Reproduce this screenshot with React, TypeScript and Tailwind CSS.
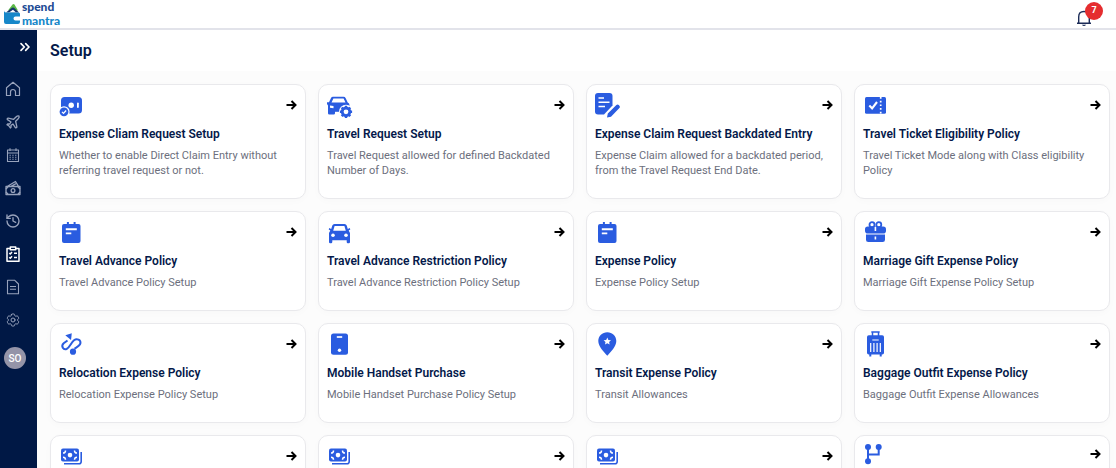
import React from 'react';
import { ChevronsRight, History, Plane } from 'lucide-react';
import { HiOutlineCog6Tooth } from 'react-icons/hi2';

type IconProps = { className?: string };

const BLUE = '#2a5ce0';

/* ---------- Card icons ---------- */

const CardSvg: React.FC<{ children: React.ReactNode; small?: boolean }> = ({ children, small }) => (
  <svg
    viewBox={small ? '0 0 26 20' : '0 0 26 24'}
    className={small ? 'h-5 w-[26px] overflow-visible' : 'h-6 w-[26px] overflow-visible'}
    fill={BLUE}
    aria-hidden="true"
  >
    {children}
  </svg>
);

const ClaimIcon = () => (
  <CardSvg>
    <rect x="2" y="4" width="21" height="16.5" rx="3.5" />
    <circle cx="12.2" cy="12.2" r="2.7" fill="#fff" />
    <rect x="18" y="9.4" width="1.8" height="5.6" rx=".9" fill="#fff" />
    <circle cx="5" cy="18.8" r="5.6" fill="#fff" />
    <circle cx="5" cy="18.8" r="4.4" />
    <path d="M3 18.9l1.5 1.5 2.6-2.9" fill="none" stroke="#fff" strokeWidth="1.3" />
  </CardSvg>
);

const GEAR_ANGLES = [0, 45, 90, 135];

const CarGearIcon = () => (
  <CardSvg>
    <path
      fillRule="evenodd"
      d="M6 3.8h10.5q1.5 0 2.2 1.4l2 4.3q1.8.6 1.8 2.5v6H8v2.2q0 1.3-1.3 1.3H2.3Q1 21.5 1 20.2V12.5L0 11V9.3h2L3.9 5.2Q4.5 3.8 6 3.8zM6.4 5.6L4.5 9.400h14L16.6 5.6z"
    />
    <path d="M3 12.4l3.5.7v2.1L3 14.7z" fill="#fff" />
    <circle cx="19" cy="18.8" r="7" fill="#fff" />
    <path d="M7 18.2h5" stroke={BLUE} strokeWidth="1.2" />
    <circle cx="19" cy="18.8" r="3.8" fill="none" stroke={BLUE} strokeWidth="2.8" />
    {GEAR_ANGLES.map(a => (
      <path key={a} d="M17.8 12.7h2.4v2.2h-2.4zM17.8 22.7h2.4v2.2h-2.4z" transform={`rotate(${a} 19 18.8)`} />
    ))}
  </CardSvg>
);

const DocEditIcon = () => (
  <CardSvg>
    <path d="M3 0h11.5q3 0 3 3v9.5L9 21.5H3q-3 0-3-3V3q0-3 3-3z" />
    <path d="M3.5 5H9M3.5 9.3h11M3.5 13.5H10" stroke="#fff" strokeWidth="1.6" />
    <path d="M12 24.6l.8-4.2 8.6-8.4q1.2-1 2.4.1l.6.6q1.2 1.2 0 2.4L16 23.7z" stroke="#fff" strokeWidth="1" paintOrder="stroke" />
  </CardSvg>
);

const TicketIcon = () => (
  <CardSvg>
    <rect x="2" y="4" width="21" height="16.7" rx="1.5" />
    <path d="M6.3 12.5l2.8 2.8 4.9-6.3" fill="none" stroke="#fff" strokeWidth="2.1" />
    <path d="M17.7 4v17" stroke="#fff" strokeWidth="1.7" strokeDasharray="1.7 2" />
  </CardSvg>
);

const NoteIcon = () => (
  <CardSvg>
    <rect x="3" y="4" width="18.5" height="19" rx="2" />
    <path d="M8.9 2v4M15.6 2v4" stroke={BLUE} strokeWidth="2" />
    <path d="M6.8 9.2h11M6.8 13.4h5.5" stroke="#fff" strokeWidth="1.9" />
  </CardSvg>
);

const CarIcon = () => (
  <CardSvg>
    <path
      fillRule="evenodd"
      d="M7.5 4h10q1.7 0 2.2 1.5L20.8 9l2-.9.5 1.5-1.6.9L23 13v9q0 1.2-1.2 1.2h-.9q-1.2 0-1.2-1.2v-1.8H5.3V22q0 1.2-1.2 1.2h-.9Q2 23.2 2 22v-9l1.3-2.5-1.6-.9.5-1.5 2 .9 1.1-3.5Q5.8 4 7.5 4zM7.6 5.9L6.2 10.7h12.6L17.4 5.9z"
    />
    <circle cx="6" cy="15.3" r="1.8" fill="#fff" />
    <circle cx="19" cy="15.3" r="1.8" fill="#fff" />
  </CardSvg>
);

const GiftIcon = () => (
  <CardSvg>
    <circle cx="9" cy="4.7" r="2.5" fill="none" stroke={BLUE} strokeWidth="1.8" />
    <circle cx="15.8" cy="4.7" r="2.5" fill="none" stroke={BLUE} strokeWidth="1.8" />
    <rect x="2" y="6.5" width="21" height="7" rx="2.8" />
    <path d="M3 14.6h19v5.1q0 2.3-2.3 2.3H5.3Q3 22 3 19.7z" />
    <path d="M12.4 7v4M12.4 16.5v3" stroke="#fff" strokeWidth="1.6" />
  </CardSvg>
);

const RouteIcon = () => (
  <CardSvg>
    <path d="M6.3 3.3L12.8 1.3 12 8z" />
    <path
      d="M8.5 8.5L4.700 11.300C1.600 14.200 4.400 18.300 7.600 17 10.600 15.700 12 10.700 15 8.200 18 6 22 8 21.400 11.300 21 13.600 17.800 15.200 15.500 16.800"
      fill="none"
      stroke={BLUE}
      strokeWidth="2"
    />
    <circle cx="14" cy="19.7" r="3.1" />
  </CardSvg>
);

const PhoneIcon = () => (
  <CardSvg>
    <rect x="4" y="1.5" width="17" height="21.3" rx="2.5" />
    <path d="M9.8 5h5.4" stroke="#fff" strokeWidth="1.7" />
    <circle cx="12.5" cy="18.2" r="1.7" fill="#fff" />
  </CardSvg>
);

const PinIcon = () => (
  <CardSvg>
    <path d="M12.3.3c5 0 9 3.8 9 8.8 0 5.5-5.5 11-9 14.7-3.5-3.7-9-9.2-9-14.7 0-5 4-8.8 9-8.8z" />
    <path d="M12.3 5.5l1.1 2.4 2.6.3-1.9 1.8.5 2.6-2.3-1.3-2.3 1.3.5-2.6-1.9-1.8 2.6-.3z" fill="#fff" />
  </CardSvg>
);

const LuggageIcon = () => (
  <CardSvg>
    <path d="M8.3 0h8.4M9.5 0v4M15.5 0v4" stroke={BLUE} strokeWidth="1.5" />
    <rect x="4" y="3.2" width="17" height="19.3" rx="1.8" />
    <path d="M6.3 22h2v2.4h-2zM16.7 22h2v2.4h-2z" />
    <path d="M9.3 8h6.4M7.7 11v9M10.9 11v9M14.1 11v9M17.3 11v9" stroke="#fff" strokeWidth="1.2" />
  </CardSvg>
);

const CashIcon = () => (
  <CardSvg>
    <rect x="2" y="4.6" width="18" height="13" rx="2" />
    <circle cx="11" cy="11.1" r="2.3" fill="#fff" />
    <path
      d="M4 9q2.5 0 2.5-2.6M18 9q-2.5 0-2.5-2.6M4 13.2q2.5 0 2.5 2.6M18 13.2q-2.5 0-2.5 2.6"
      fill="none"
      stroke="#fff"
      strokeWidth="1.5"
    />
    <path d="M22.2 8v9.5q0 2.3-2.3 2.3H5" fill="none" stroke={BLUE} strokeWidth="1.6" />
  </CardSvg>
);

const BranchIcon = () => (
  <CardSvg small>
    <circle cx="5" cy="3" r="3" />
    <circle cx="15.7" cy="3" r="3" />
    <circle cx="5" cy="17.3" r="3" />
    <path d="M5 3v14M5 10.5h10.7V3" fill="none" stroke={BLUE} strokeWidth="2" />
  </CardSvg>
);

/* ---------- Sidebar icons ---------- */

const HomeIcon = ({ className }: IconProps) => (
  <svg viewBox="0 0 16 16" className={className} fill="none" stroke="currentColor" strokeWidth="1.2" strokeLinejoin="round">
    <path d="M1.5 6.7L8 1.3l6.5 5.4v7.8h-4V11a2.5 2.5 0 0 0-5 0v3.5h-4z" />
  </svg>
);

const CalendarIcon = ({ className }: IconProps) => (
  <svg viewBox="0 0 16 16" className={className} fill="none" stroke="currentColor" strokeWidth="1.1" strokeLinejoin="round">
    <path d="M2.5 3h11v11.5h-11zM2.5 6h11M5 1.3V4M11 1.3V4" />
    <path d="M4.5 8.3h7M4.5 10.3h7M4.5 12.3h7" strokeDasharray="1.3 1.5" />
  </svg>
);

const WalletIcon = ({ className }: IconProps) => (
  <svg viewBox="0 0 16 16" className={className} fill="none" stroke="currentColor" strokeWidth="1.3" strokeLinejoin="round">
    <path d="M1 6.5h14v8H1zM2.5 6.3l8-4.8 3 4.8M6 6.3l5-2.6" />
    <circle cx="8" cy="10.5" r="1.9" />
    <path d="M1 9l2-2.3M15 9l-2-2.3M1 12l2 2.3M15 12l-2 2.3" />
  </svg>
);

const ChecklistIcon = ({ className }: IconProps) => (
  <svg viewBox="0 0 16 16" className={className} fill="none" stroke="currentColor" strokeWidth="1.5" strokeLinejoin="round">
    <path d="M5 2.5H2v12.7h12V2.5h-3" />
    <path d="M5.3 1h5.4v2.8H5.3z" />
    <path d="M4.3 7l1 1 1.7-2M9 7.3h3M4.3 11.3l1 1 1.7-2M9 11.6h3" />
  </svg>
);

const FileIcon = ({ className }: IconProps) => (
  <svg viewBox="0 0 16 16" className={className} fill="none" stroke="currentColor" strokeWidth="1.1" strokeLinejoin="round">
    <path d="M2.5 1.3h7.3l3.7 3.7v9.7h-11zM5 7.5h6M5 10.3h6" />
  </svg>
);

const BellIcon = () => (
  <svg viewBox="0 0 16 18" className="h-[18px] w-4" fill="none" stroke="#1b2b57" strokeWidth="1.4" strokeLinejoin="round">
    <path d="M1 14.3h14M2.7 14V8Q2.7 2.5 8 2.5T13.3 8v6" />
    <path d="M5.8 15.7q2.2 2.5 4.4 0z" fill="#1b2b57" stroke="none" />
  </svg>
);

const ArrowIcon = () => (
  <svg viewBox="0 0 12 12" className="h-3 w-3" fill="none" stroke="#000" strokeWidth="2" aria-hidden="true">
    <path d="M1.5 6h9M6.5 2l4 4-4 4" />
  </svg>
);

/* ---------- Data ---------- */

interface SetupItem {
  icon: React.FC;
  title?: string;
  description?: string;
}

const items: SetupItem[] = [
  { icon: ClaimIcon, title: 'Expense Cliam Request Setup', description: 'Whether to enable Direct Claim Entry without referring travel request or not.' },
  { icon: CarGearIcon, title: 'Travel Request Setup', description: 'Travel Request allowed for defined Backdated Number of Days.' },
  { icon: DocEditIcon, title: 'Expense Claim Request Backdated Entry', description: 'Expense Claim allowed for a backdated period, from the Travel Request End Date.' },
  { icon: TicketIcon, title: 'Travel Ticket Eligibility Policy', description: 'Travel Ticket Mode along with Class eligibility Policy' },
  { icon: NoteIcon, title: 'Travel Advance Policy', description: 'Travel Advance Policy Setup' },
  { icon: CarIcon, title: 'Travel Advance Restriction Policy', description: 'Travel Advance Restriction Policy Setup' },
  { icon: NoteIcon, title: 'Expense Policy', description: 'Expense Policy Setup' },
  { icon: GiftIcon, title: 'Marriage Gift Expense Policy', description: 'Marriage Gift Expense Policy Setup' },
  { icon: RouteIcon, title: 'Relocation Expense Policy', description: 'Relocation Expense Policy Setup' },
  { icon: PhoneIcon, title: 'Mobile Handset Purchase', description: 'Mobile Handset Purchase Policy Setup' },
  { icon: PinIcon, title: 'Transit Expense Policy', description: 'Transit Allowances' },
  { icon: LuggageIcon, title: 'Baggage Outfit Expense Policy', description: 'Baggage Outfit Expense Allowances' },
  { icon: CashIcon },
  { icon: CashIcon },
  { icon: CashIcon },
  { icon: BranchIcon },
];

const navItems: { id: string; icon: React.ElementType; active?: boolean }[] = [
  { id: 'home', icon: HomeIcon },
  { id: 'travel', icon: Plane },
  { id: 'calendar', icon: CalendarIcon },
  { id: 'expenses', icon: WalletIcon },
  { id: 'history', icon: History },
  { id: 'setup', icon: ChecklistIcon, active: true },
  { id: 'reports', icon: FileIcon },
  { id: 'settings', icon: HiOutlineCog6Tooth },
];

/* ---------- Layout ---------- */

const Logo = () => (
  <a href="#" className="flex items-center gap-px">
    <svg viewBox="0 0 17 22" className="h-[22px] w-[17px]" aria-hidden="true">
      <path d="M4 7.5L8.5 1.5q1-1 2 0L14 7.5z" fill="#5cb947" />
      <path d="M2 9.5L8 4.8q1-.6 2 0l5 4.7z" fill="#16356f" />
      <path d="M5 9.5l4-2.8 3 2.8z" fill="#fff" />
      <path d="M0 7.5q0 2 2 2h12.5q1.5 0 1.5 1.5v2.5h-4.5q-2 0-2 2t2 2H16V19q0 2-2 2H2q-2 0-2-2z" fill="#1687c9" />
    </svg>
    <span className="flex flex-col font-['Lato',sans-serif] text-[12px] leading-[14px] font-black">
      <span className="text-[#1c4a94]">spend</span>
      <span className="text-[#1687c9]">mantra</span>
    </span>
  </a>
);

const Header = () => (
  <header className="flex h-[30px] shrink-0 items-center justify-between border-b-2 border-[#e2e3ea] bg-white pr-6 pl-1">
    <Logo />
    <button type="button" className="relative mt-2">
      <BellIcon />
      <span className="absolute -top-[7px] left-[9px] flex h-[18px] w-[18px] items-center justify-center rounded-full bg-[#e52d2f] text-[9px] font-bold text-white">
        7
      </span>
    </button>
  </header>
);

const Sidebar = () => (
  <aside className="flex w-[37px] shrink-0 flex-col bg-[#001845]">
    <button type="button" className="mt-[9px] mr-1 self-end text-white">
      <ChevronsRight className="h-4 w-4" strokeWidth={2.5} />
    </button>
    <nav className="mt-[17px] flex flex-col">
      {navItems.map(({ id, icon: Icon, active }) => (
        <a
          key={id}
          href={`#${id}`}
          className={active ? 'flex h-[33px] items-center pl-[5px] text-white' : 'flex h-[33px] items-center pl-[5px] text-[#98a3bc]'}
        >
          <Icon className="h-4 w-4" />
        </a>
      ))}
    </nav>
    <button
      type="button"
      className="mt-[11px] ml-1 flex h-[22px] w-[22px] items-center justify-center rounded-full bg-[#9494a8] text-[10px] font-medium text-white"
    >
      SO
    </button>
  </aside>
);

const SetupCard: React.FC<{ item: SetupItem }> = ({ item }) => {
  const Icon = item.icon;
  return (
    <a href="#" className="block min-h-[100px] rounded-[10px] border border-[#e9e9ec] bg-white px-2 pt-2 pb-5 shadow-[0_2px_8px_rgba(0,0,0,0.02)]">
      <div className="flex items-center justify-between">
        <Icon />
        <ArrowIcon />
      </div>
      {item.title && <h2 className="mt-2 text-[12px] leading-[18px] font-semibold text-[#04194a]">{item.title}</h2>}
      {item.description && <p className="mt-[5px] text-[11px] leading-[15px] text-[#6c6f7d]">{item.description}</p>}
    </a>
  );
};

const App: React.FC = () => {
  return (
    <div className="flex h-screen flex-col overflow-hidden bg-white font-['Roboto',sans-serif]">
      <Header />
      <div className="flex min-h-0 flex-1">
        <Sidebar />
        <main className="flex min-w-0 flex-1 flex-col">
          <div className="flex h-[41px] shrink-0 items-center bg-white px-[13px]">
            <h1 className="text-base font-semibold text-[#04194a]">Setup</h1>
          </div>
          <div className="min-h-0 flex-1 overflow-hidden bg-[#fcfcfc] pt-[13px] pr-1.5 pl-[13px]">
            <div className="grid grid-cols-2 gap-3 md:grid-cols-4">
              {items.map((item, i) => (
                <SetupCard key={i} item={item} />
              ))}
            </div>
          </div>
        </main>
      </div>
    </div>
  );
};

export default App;
